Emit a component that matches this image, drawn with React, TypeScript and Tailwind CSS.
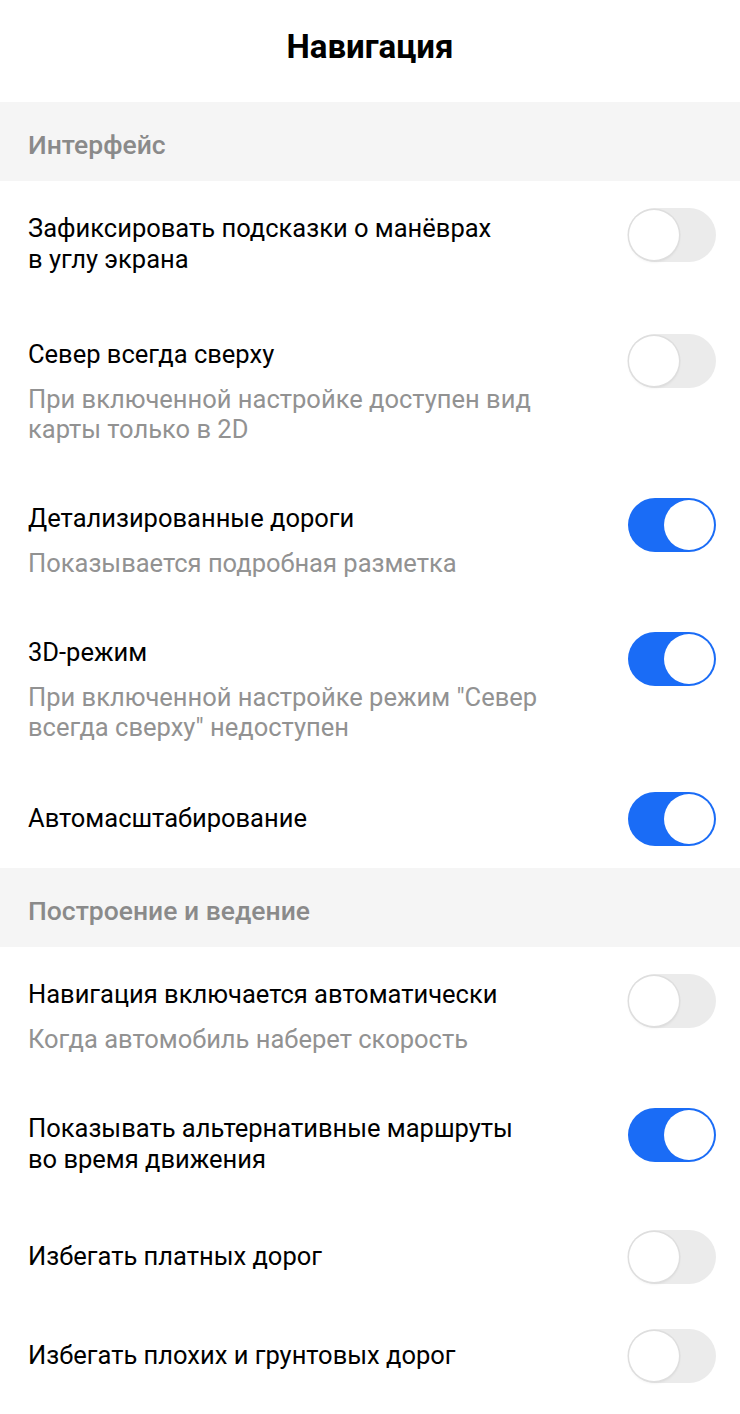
import React, { useState } from "react";

type Setting = {
  title: string;
  hint?: string;
  on: boolean;
};

const interfaceSettings: Setting[] = [
  { title: "Зафиксировать подсказки о манёврах\nв углу экрана", on: false },
  {
    title: "Север всегда сверху",
    hint: "При включенной настройке доступен вид\nкарты только в 2D",
    on: false,
  },
  { title: "Детализированные дороги", hint: "Показывается подробная разметка", on: true },
  {
    title: "3D-режим",
    hint: "При включенной настройке режим \"Север\nвсегда сверху\" недоступен",
    on: true,
  },
  { title: "Автомасштабирование", on: true },
];

const routeSettings: Setting[] = [
  { title: "Навигация включается автоматически", hint: "Когда автомобиль наберет скорость", on: false },
  { title: "Показывать альтернативные маршруты\nво время движения", on: true },
  { title: "Избегать платных дорог", on: false },
  { title: "Избегать плохих и грунтовых дорог", on: false },
];

const Toggle = ({ on, onClick }: { on: boolean; onClick: () => void }) => (
  <button
    onClick={onClick}
    className={
      on
        ? "relative h-[54px] w-[88px] shrink-0 rounded-full bg-[#1a6cf6]"
        : "relative h-[54px] w-[88px] shrink-0 rounded-full bg-[#ebebeb]"
    }
  >
    <span
      className={
        on
          ? "absolute right-[2px] top-[2px] h-[50px] w-[50px] rounded-full bg-white"
          : "absolute left-[1px] top-[2px] h-[50px] w-[50px] rounded-full bg-white shadow-[0_0_0_1.5px_#dedede,0_2px_3px_rgba(0,0,0,0.08)]"
      }
    />
  </button>
);

const SettingRow = ({ setting }: { setting: Setting }) => {
  const [on, setOn] = useState(setting.on);
  const twoLines = setting.title.includes("\n");
  const multiline = twoLines || !!setting.hint;

  // rows ending in a hint sit a little tighter than rows ending in a title
  let pad = "flex items-start pl-7 pr-6 pt-8 pb-8";
  if (setting.hint) pad = "flex items-start pl-7 pr-6 pt-8 pb-[27px]";
  if (!multiline) pad = "flex items-start pl-7 pr-6 pt-[34px] pb-[34px]";

  return (
    <div className={pad}>
      <div className="flex-1">
        <div className="whitespace-pre-line text-[25.5px] leading-[31px] text-black">{setting.title}</div>
        {setting.hint && (
          <div className="mt-[14px] whitespace-pre-line text-[25.5px] leading-[30px] text-[#929292]">
            {setting.hint}
          </div>
        )}
      </div>
      <div className={multiline ? "flex h-[31px] items-center pt-[12px]" : "flex h-[31px] items-center"}>
        <Toggle on={on} onClick={() => setOn(!on)} />
      </div>
    </div>
  );
};

const SectionHeader = ({ label }: { label: string }) => (
  <div className="flex h-[79px] items-center bg-[#f5f5f5] px-7 pt-[7px]">
    <span className="text-[26.5px] font-medium text-[#8a8a8a]">{label}</span>
  </div>
);

export default function App() {
  return (
    <div className="min-h-screen w-[740px] bg-white font-['Roboto',sans-serif]">
      <div className="flex h-[102px] items-center justify-center pb-2">
        <h1 className="text-[33px] font-bold text-black">Навигация</h1>
      </div>
      <SectionHeader label="Интерфейс" />
      {interfaceSettings.map((s) => (
        <SettingRow key={s.title} setting={s} />
      ))}
      <SectionHeader label="Построение и ведение" />
      {routeSettings.map((s) => (
        <SettingRow key={s.title} setting={s} />
      ))}
    </div>
  );
}
